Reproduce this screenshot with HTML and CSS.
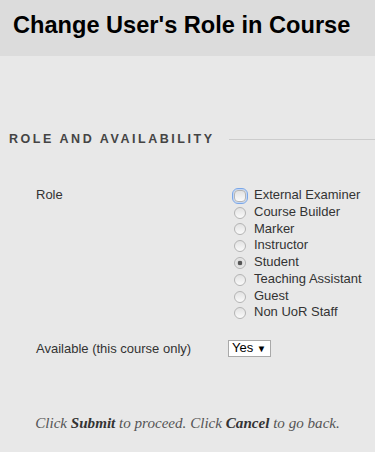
FILE: index.html
```html
<!DOCTYPE html>
<html lang="en">
<head>
  <meta charset="UTF-8">
  <title>Change User's Role in Course</title>
  <link rel="stylesheet" href="styles.css">
</head>
<body>
  <div class="page-header">
    <h1>Change User's Role in Course</h1>
  </div>

  <form class="role-form">
    <div class="step">
      <h2 class="step-title"><span>Role and Availability</span></h2>

      <div class="field">
        <div class="field-label">Role</div>
        <div class="field-input">
          <label class="opt"><input type="radio" name="role" class="focused"> External Examiner</label>
          <label class="opt"><input type="radio" name="role"> Course Builder</label>
          <label class="opt"><input type="radio" name="role"> Marker</label>
          <label class="opt"><input type="radio" name="role"> Instructor</label>
          <label class="opt"><input type="radio" name="role" checked> Student</label>
          <label class="opt"><input type="radio" name="role"> Teaching Assistant</label>
          <label class="opt"><input type="radio" name="role"> Guest</label>
          <label class="opt"><input type="radio" name="role"> Non UoR Staff</label>
        </div>
      </div>

      <div class="field field-avail">
        <div class="field-label">Available (this course only)</div>
        <div class="field-input">
          <span class="select">Yes <span class="arrow">&#9660;</span></span>
        </div>
      </div>
    </div>

    <p class="submit-hint">Click <b>Submit</b> to proceed. Click <b>Cancel</b> to go back.</p>
  </form>
</body>
</html>
```

FILE: styles.css
```css
body {
  margin: 0;
  background: #e8e8e8;
  font-family: Arial, "Liberation Sans", sans-serif;
  color: #333;
}
.page-header {
  background: #dcdcdc;
  height: 56px;
  padding: 0 13px;
  box-sizing: border-box;
}
.page-header h1 {
  margin: 0;
  padding-top: 11px;
  font-size: 23.6px;
  font-weight: bold;
  color: #000;
  line-height: 28px;
}
.step {
  padding-top: 75px;
}
.step-title {
  display: flex;
  align-items: center;
  margin: 0 0 0 9px;
  font-size: 12.5px;
  font-weight: bold;
  letter-spacing: 2.55px;
  text-transform: uppercase;
  color: #444;
  line-height: 16px;
}
.step-title::after {
  content: "";
  flex: 1;
  height: 1px;
  background: #ccc;
  margin-left: 14px;
}
.field {
  display: flex;
  margin-top: 39px;
  font-size: 13px;
  line-height: 17px;
}
.field-label {
  width: 196px;
  padding-left: 36px;
  color: #333;
}
.field-input {
  display: flex;
  flex-direction: column;
}
.opt {
  display: flex;
  align-items: center;
  height: 16.8px;
  color: #333;
}
.opt input {
  appearance: none;
  -webkit-appearance: none;
  width: 12px;
  height: 12px;
  margin: 3px 8px 0 2px;
  border: 1px solid #b4b4b4;
  border-radius: 50%;
  background: linear-gradient(#e2e2e2, #fafafa);
  box-sizing: border-box;
}
.opt input:checked {
  background: radial-gradient(circle, #555 0, #555 2px, #ddd 2.6px, #f4f4f4 100%);
}
.opt input.focused {
  outline: 1px solid #7aa7e8;
  outline-offset: 1px;
  border-radius: 4px;
  box-shadow: 0 0 0 1px #c2d6f5;
}
.field-avail {
  margin-top: 20px;
  align-items: center;
}
.select {
  display: inline-block;
  background: #fff;
  border: 1px solid #a9a9a9;
  padding: 0 4px 0 3px;
  line-height: 14px;
  font-size: 13px;
  color: #000;
  margin-left: -4px;
}
.arrow {
  font-size: 9.5px;
  margin-left: 0;
}
.submit-hint {
  margin: 58px 0 0;
  text-align: center;
  font-family: "Liberation Serif", Georgia, serif;
  font-style: italic;
  font-size: 15.1px;
  color: #555;
}
.submit-hint b {
  color: #333;
}
```
